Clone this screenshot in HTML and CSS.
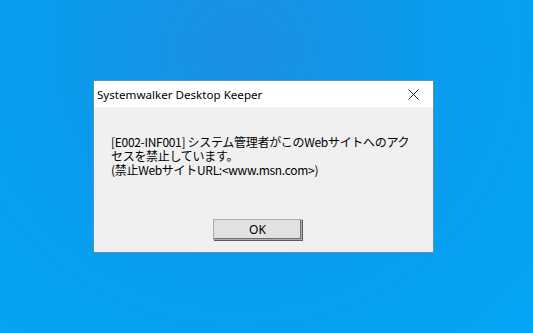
FILE: index.html
```
<!DOCTYPE html>
<html lang="ja">
<head>
    <meta charset="UTF-8">
    <meta name="viewport" content="width=device-width, initial-scale=1.0">
    <title>Systemwalker Desktop Keeper</title>
    <link rel="stylesheet" href="styles.css">
</head>
<body>
    <div class="dialog">
        <div class="title-bar">
            <span class="title">Systemwalker Desktop Keeper</span>
            <span class="close">
                <svg width="11" height="11" viewBox="0 0 11 11">
                    <path d="M0.5 0.5 L10.5 10.5 M10.5 0.5 L0.5 10.5" stroke="#222" stroke-width="1" fill="none"/>
                </svg>
            </span>
        </div>
        <div class="dialog-body">
            <p class="message">[E002-INF001] システム管理者がこのWebサイトへのアクセスを禁止しています。<br>(禁止WebサイトURL:&lt;www.msn.com&gt;)</p>
            <div class="buttons">
                <button type="button" class="ok-button">OK</button>
            </div>
        </div>
    </div>
</body>
</html>
```

FILE: styles.css
```
body {
    margin: 0;
    height: 333px;
    overflow: hidden;
    background: radial-gradient(ellipse at 45% 15%, #1c8fe2 0%, #0a9bec 45%, #03a6f5 100%);
    padding: 80px 0 0 93px;
    box-sizing: border-box;
}
.dialog {
    width: 341px;
    height: 173px;
    box-sizing: border-box;
    border: 1px solid #5b8fc0;
    background-color: #f0f0f0;
    display: flex;
    flex-direction: column;
}
.title-bar {
    height: 26px;
    background-color: #fff;
    display: flex;
    align-items: center;
    justify-content: space-between;
    padding: 0 14px 0 3px;
}
.title {
    font-family: "Noto Sans", "Open Sans", sans-serif;
    font-size: 11.6px;
    color: #000;
}
.close {
    display: flex;
    align-items: center;
}
.dialog-body {
    flex: 1;
    display: flex;
    flex-direction: column;
    padding: 28px 18px 12px 17px;
}
.message {
    margin: 0;
    flex: 1;
    font-family: "Noto Sans CJK JP", sans-serif;
    font-size: 12px;
    line-height: 14px;
    color: #000;
    letter-spacing: -0.3px;
}
.buttons {
    display: flex;
}
.ok-button {
    width: 89px;
    height: 21px;
    margin-left: 102px;
    background-color: #e1e1e1;
    border: 1px solid #adadad;
    box-shadow: inset -1px -1px 0 #707070, 1px 1px 0 #5a5a5a;
    font-family: "Noto Sans", sans-serif;
    font-size: 12px;
    color: #000;
    padding: 0;
}
```
